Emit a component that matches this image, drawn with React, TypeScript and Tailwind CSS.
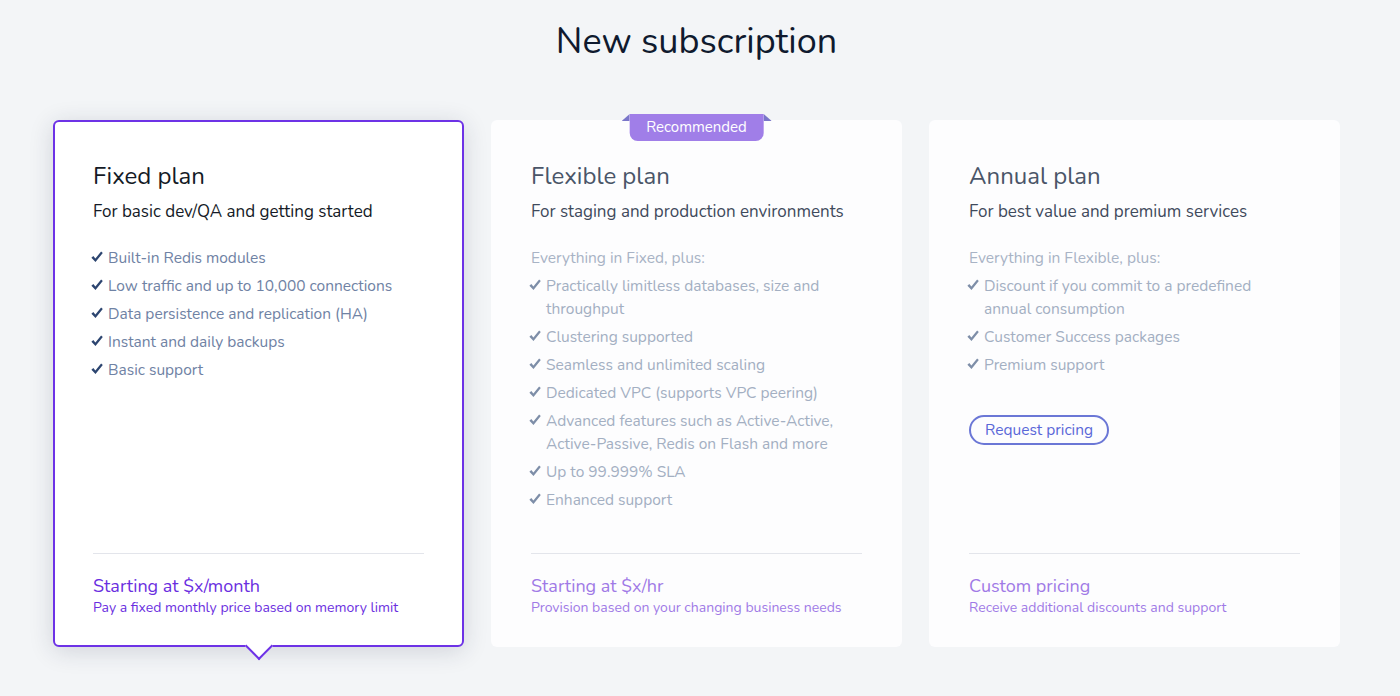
import React from 'react';

type Plan = {
  name: string;
  tagline: string;
  intro?: string;
  features: string[];
  price: string;
  priceNote: string;
  selected?: boolean;
  recommended?: boolean;
  action?: string;
};

const plans: Plan[] = [
  {
    name: 'Fixed plan',
    tagline: 'For basic dev/QA and getting started',
    features: [
      'Built-in Redis modules',
      'Low traffic and up to 10,000 connections',
      'Data persistence and replication (HA)',
      'Instant and daily backups',
      'Basic support',
    ],
    price: 'Starting at $x/month',
    priceNote: 'Pay a fixed monthly price based on memory limit',
    selected: true,
  },
  {
    name: 'Flexible plan',
    tagline: 'For staging and production environments',
    intro: 'Everything in Fixed, plus:',
    features: [
      'Practically limitless databases, size and throughput',
      'Clustering supported',
      'Seamless and unlimited scaling',
      'Dedicated VPC (supports VPC peering)',
      'Advanced features such as Active-Active, Active-Passive, Redis on Flash and more',
      'Up to 99.999% SLA',
      'Enhanced support',
    ],
    price: 'Starting at $x/hr',
    priceNote: 'Provision based on your changing business needs',
    recommended: true,
  },
  {
    name: 'Annual plan',
    tagline: 'For best value and premium services',
    intro: 'Everything in Flexible, plus:',
    features: [
      'Discount if you commit to a predefined annual consumption',
      'Customer Success packages',
      'Premium support',
    ],
    price: 'Custom pricing',
    priceNote: 'Receive additional discounts and support',
    action: 'Request pricing',
  },
];

const Check = ({ className }: { className: string }) => (
  <svg viewBox="0 0 12 12" className={className} fill="currentColor">
    <path d="M0.4 6.8 L2.3 5.1 L4.4 7.4 L10.1 0.6 L11.8 2.0 L4.5 10.9 Z" />
  </svg>
);

const PlanCard: React.FC<{ plan: Plan }> = ({ plan }) => {
  const on = plan.selected;
  return (
    <div
      className={`relative flex h-[527px] w-[411px] flex-col rounded-md border-2 px-[38px] pb-[27px] pt-[38px] ${
        on
          ? 'border-[#6d32e6] bg-white shadow-[0_4px_24px_rgba(30,40,70,0.16)]'
          : 'border-transparent bg-[#fdfdfe]'
      }`}
    >
      {plan.recommended && (
        <div className="absolute left-1/2 top-[-8px] flex -translate-x-1/2 items-start">
          <svg width="8" height="7" viewBox="0 0 8 7">
            <polygon points="0,7 8,0 8,7" fill="#7a76c9" />
          </svg>
          <div className="flex h-[27px] items-center rounded-b-lg bg-[#a07ee8] px-[17px] text-[15px] leading-none text-white">
            Recommended
          </div>
          <svg width="8" height="7" viewBox="0 0 8 7">
            <polygon points="0,0 8,7 0,7" fill="#7a76c9" />
          </svg>
        </div>
      )}

      <h2 className={`text-[24px] leading-8 ${on ? 'text-[#141a26]' : 'text-[#4a5568]'}`}>{plan.name}</h2>
      <p className={`mt-[8px] text-[17px] leading-6 ${on ? 'text-[#141a26]' : 'text-[#3f4a5c]'}`}>{plan.tagline}</p>

      <ul className="mt-[22px] flex flex-col gap-[5px] text-[15.5px] leading-[23px]">
        {plan.intro && <li className="text-[#a8b3c5]">{plan.intro}</li>}
        {plan.features.map((f) => (
          <li key={f} className="flex items-start">
            <Check className={`-ml-[2px] mr-[5px] mt-[5px] h-3 w-3 shrink-0 ${on ? 'text-[#2c4570]' : 'text-[#7e8ea8]'}`} />
            <span className={on ? 'text-[#6f82a4]' : 'text-[#a3afc2]'}>{f}</span>
          </li>
        ))}
      </ul>

      {plan.action && (
        <div className="mt-[39px]">
          <button className="h-[30px] rounded-full border-2 border-[#6b77d6] px-[14px] text-[15.5px] leading-none text-[#5a67d8]">
            {plan.action}
          </button>
        </div>
      )}

      <div className="mt-auto border-t border-[#e3e5eb] pt-[20px]">
        <div className={`text-[18px] leading-6 ${on ? 'text-[#6a2ee0]' : 'text-[#a07ae6]'}`}>{plan.price}</div>
        <div className={`text-[14px] leading-5 ${on ? 'text-[#6a2ee0]' : 'text-[#a07ae6]'}`}>{plan.priceNote}</div>
      </div>

      {on && (
        <div className="absolute bottom-[-11px] left-1/2 h-5 w-5 -translate-x-1/2 rotate-45 border-b-2 border-r-2 border-[#6d32e6] bg-white" />
      )}
    </div>
  );
};

const App: React.FC = () => {
  return (
    <div className="min-h-[696px] bg-[#f3f5f7]" style={{ fontFamily: 'Nunito, Lato, "Noto Sans", sans-serif' }}>
      <div className="w-[1393px] pb-10 pt-[20px]">
        <h1 className="text-center text-[36px] leading-[44px] text-[#0f1a2e]">New subscription</h1>
        <div className="mt-[56px] flex justify-center gap-[27px]">
          {plans.map((p) => (
            <PlanCard key={p.name} plan={p} />
          ))}
        </div>
      </div>
    </div>
  );
};

export default App;
